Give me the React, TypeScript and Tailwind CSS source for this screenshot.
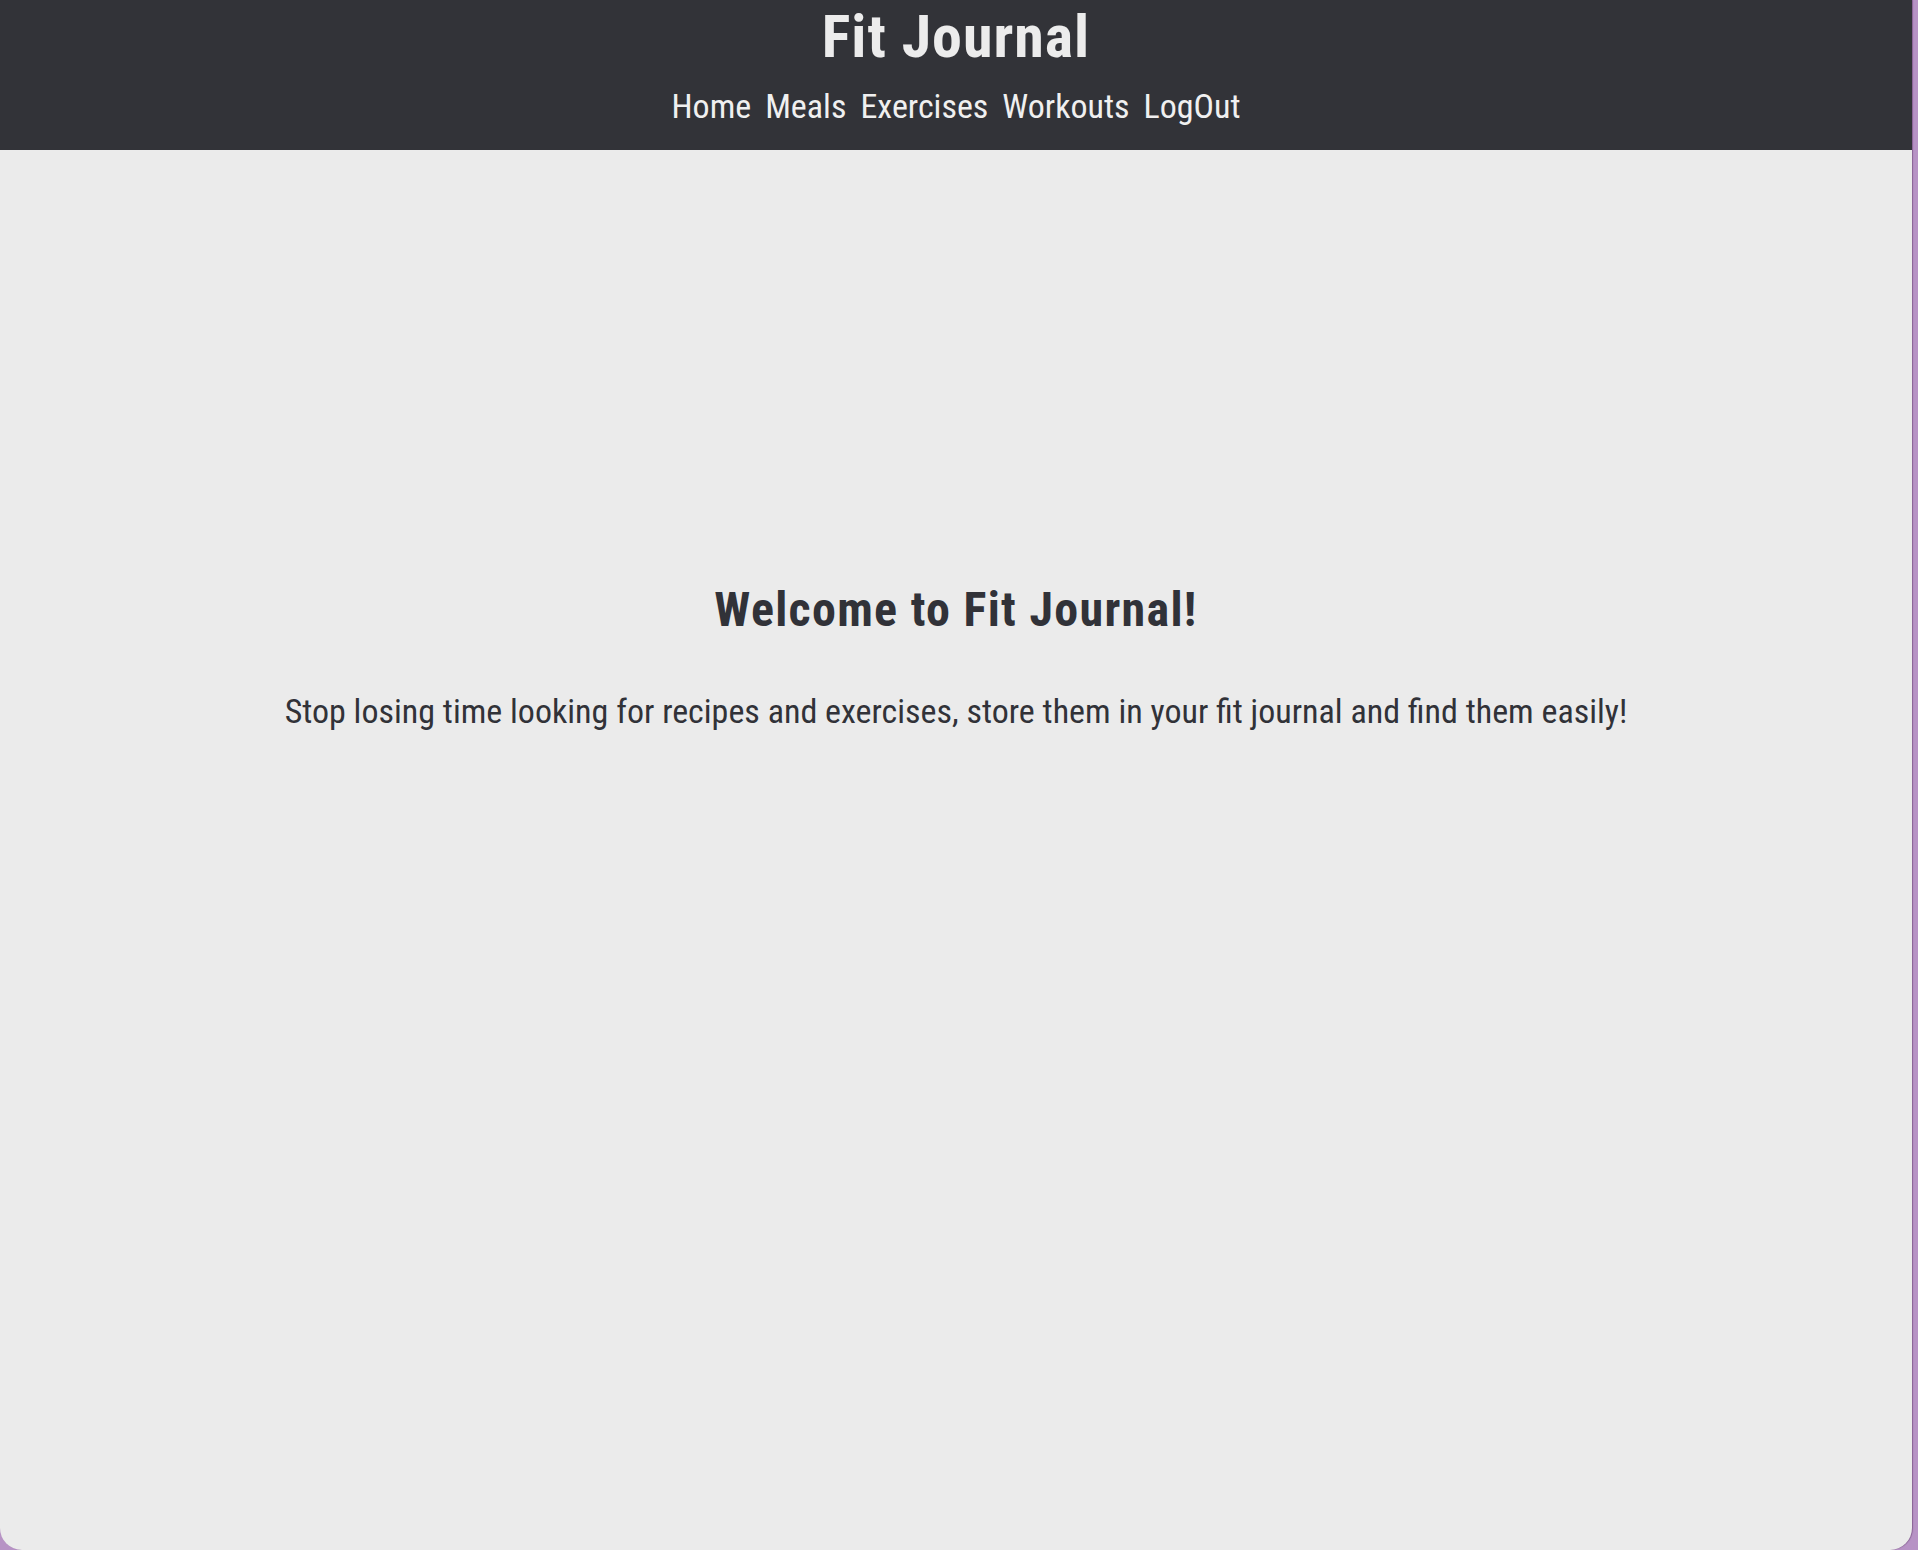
export default function App() {
  const nav = ["Home", "Meals", "Exercises", "Workouts", "LogOut"];
  return (
    <div className="flex h-[1550px] w-full bg-[#b793c5] font-['Roboto_Condensed','Roboto',sans-serif]">
      <div className="flex h-full w-[1912px] flex-col overflow-hidden rounded-b-[22px] bg-[#ebebeb] shadow-[1px_0_1px_rgba(80,40,90,0.45)]">
        <header className="flex h-[150px] flex-col items-center bg-[#323338] pt-[7px] text-[#ececec]">
          <h1 className="text-[60px] font-bold leading-[60px] tracking-[1px]">Fit Journal</h1>
          <nav className="mt-[22px] flex gap-[14px] text-[34px] leading-[34px]">
            {nav.map((n) => (
              <a key={n} href="#" className="text-[#f0f0f0]">
                {n}
              </a>
            ))}
          </nav>
        </header>
        <main className="flex flex-1 flex-col items-center pt-[436px] text-[#313238]">
          <h2 className="text-[48px] font-bold leading-[48px] tracking-[1.3px]">Welcome to Fit Journal!</h2>
          <p className="mt-[60px] text-[34px] leading-[34px]">
            Stop losing time looking for recipes and exercises, store them in your fit journal and find them easily!
          </p>
        </main>
      </div>
    </div>
  );
}
